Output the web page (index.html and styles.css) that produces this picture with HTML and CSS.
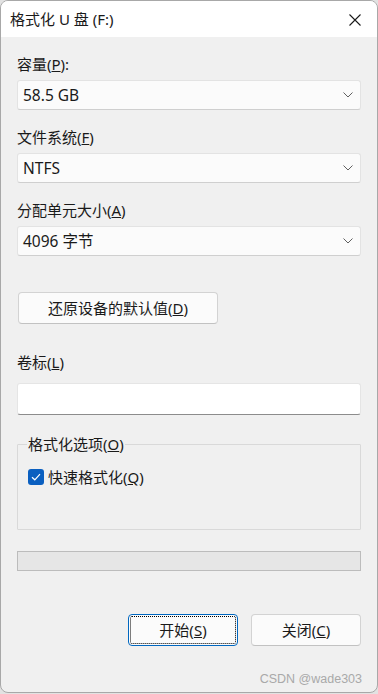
FILE: index.html
```html
<!DOCTYPE html>
<html lang="zh-CN">
<head>
    <meta charset="UTF-8">
    <meta name="viewport" content="width=device-width, initial-scale=1.0">
    <title>格式化 U 盘 (F:)</title>
    <link rel="stylesheet" href="styles.css">
</head>
<body>
    <div class="window">
        <div class="titlebar">
            <div class="title">格式化 U 盘 (F:)</div>
            <svg class="close-icon" width="12" height="12" viewBox="0 0 12 12">
                <path d="M0.5 0.5 L11.5 11.5 M11.5 0.5 L0.5 11.5" stroke="#1a1a1a" stroke-width="1.1" fill="none"/>
            </svg>
        </div>

        <div class="content">
            <div class="field">
                <div class="label">容量(<u>P</u>):</div>
                <div class="select">
                    <span>58.5 GB</span>
                    <svg class="chevron" width="10" height="6" viewBox="0 0 10 6"><path d="M0.5 0.5 L5 5 L9.5 0.5" stroke="#606060" fill="none"/></svg>
                </div>
            </div>

            <div class="field">
                <div class="label">文件系统(<u>F</u>)</div>
                <div class="select">
                    <span>NTFS</span>
                    <svg class="chevron" width="10" height="6" viewBox="0 0 10 6"><path d="M0.5 0.5 L5 5 L9.5 0.5" stroke="#606060" fill="none"/></svg>
                </div>
            </div>

            <div class="field">
                <div class="label">分配单元大小(<u>A</u>)</div>
                <div class="select">
                    <span>4096 字节</span>
                    <svg class="chevron" width="10" height="6" viewBox="0 0 10 6"><path d="M0.5 0.5 L5 5 L9.5 0.5" stroke="#606060" fill="none"/></svg>
                </div>
            </div>

            <button class="btn restore-button">还原设备的默认值(<u>D</u>)</button>

            <div class="label volume-label">卷标(<u>L</u>)</div>
            <div class="textbox"></div>

            <fieldset class="options">
                <legend>格式化选项(<u>O</u>)</legend>
                <label class="check-row">
                    <span class="checkbox">
                        <svg width="10" height="8" viewBox="0 0 10 8"><path d="M1 4.2 L3.8 6.8 L9 1.2" stroke="#fff" stroke-width="1.2" fill="none"/></svg>
                    </span>
                    <span>快速格式化(<u>Q</u>)</span>
                </label>
            </fieldset>

            <div class="progress"></div>

            <div class="actions">
                <button class="btn action-button focused">开始(<u>S</u>)</button>
                <button class="btn action-button">关闭(<u>C</u>)</button>
            </div>

            <div class="watermark">CSDN @wade303</div>
        </div>
    </div>
</body>
</html>
```

FILE: styles.css
```css
body {
    margin: 0;
    padding: 0;
    background-color: #e2e2e2;
    font-family: "Noto Sans", "Noto Sans CJK SC", sans-serif;
    font-size: 15px;
    color: #1a1a1a;
}

.window {
    width: 376px;
    height: 691px;
    border: 1px solid #a8a8a8;
    border-radius: 8px;
    background-color: #f0f0f0;
    overflow: hidden;
    display: flex;
    flex-direction: column;
}

.titlebar {
    height: 36px;
    background-color: #ffffff;
    display: flex;
    align-items: center;
    justify-content: space-between;
    padding: 0 16px 0 9px;
}

.title {
    font-size: 15px;
    line-height: 20px;
}

.close-icon {
    display: block;
    margin-top: 1px;
}

.content {
    padding: 17px 16px 0 16px;
    display: flex;
    flex-direction: column;
}

.label {
    line-height: 20px;
    height: 20px;
}

.field {
    margin-bottom: 17px;
}

.field .label {
    margin-bottom: 6px;
}

.select {
    height: 28px;
    background-color: #fbfbfb;
    border: 1px solid #e3e3e3;
    border-bottom-color: #cfcfcf;
    border-radius: 3px;
    display: flex;
    align-items: center;
    justify-content: space-between;
    padding: 0 7px 0 5px;
}

.select span {
    font-size: 15.5px;
    line-height: 20px;
}

.chevron {
    display: block;
}

.btn {
    font-family: "Noto Sans", "Noto Sans CJK SC", sans-serif;
    font-size: 15px;
    color: #1a1a1a;
    background-color: #fbfbfb;
    border: 1px solid #d3d3d3;
    border-bottom-color: #c2c2c2;
    border-radius: 4px;
    height: 32px;
    padding: 0;
    line-height: 20px;
}

.restore-button {
    width: 200px;
    margin-top: 19px;
    margin-left: 1px;
}

.volume-label {
    margin-top: 28px;
}

.textbox {
    margin-top: 11px;
    height: 30px;
    background-color: #ffffff;
    border: 1px solid #e5e5e5;
    border-bottom-color: #8c8c8c;
    border-radius: 3px;
}

.options {
    margin: 19px 0 0 0;
    padding: 0 10px;
    height: 94px;
    border: 1px solid #d9d9d9;
    border-radius: 1px;
    min-width: 0;
}

.options legend {
    padding: 0 1px;
    margin-left: -1px;
    line-height: 20px;
}

.check-row {
    display: flex;
    align-items: center;
    gap: 4px;
    margin-top: 13px;
    line-height: 20px;
}

.checkbox {
    width: 16px;
    height: 16px;
    border-radius: 3px;
    background-color: #0a5fc0;
    display: flex;
    align-items: center;
    justify-content: center;
}

.checkbox svg {
    display: block;
}

.progress {
    margin-top: 21px;
    height: 18px;
    background-color: #e6e6e6;
    border: 1px solid #bcbcbc;
}

.actions {
    margin-top: 43px;
    display: flex;
    justify-content: flex-end;
    gap: 13px;
}

.action-button {
    width: 110px;
}

.action-button.focused {
    border-color: #0067c0;
    outline: 1px dotted #000000;
    outline-offset: -3px;
}

.watermark {
    margin-top: 25px;
    text-align: right;
    margin-right: -1px;
    font-family: "Liberation Sans", Arial, sans-serif;
    font-size: 12.5px;
    line-height: 16px;
    color: #a9a9a9;
}
```
